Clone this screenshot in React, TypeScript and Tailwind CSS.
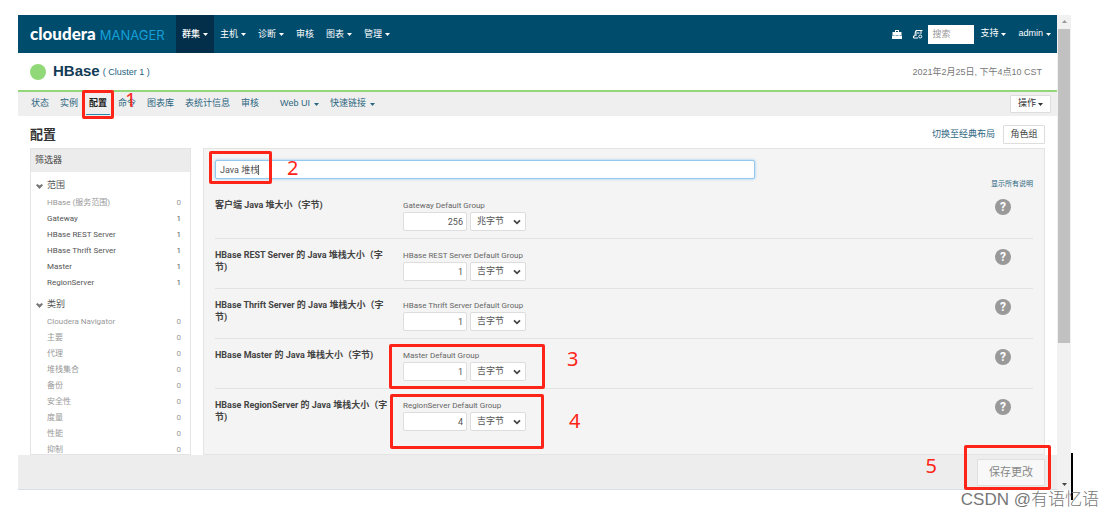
import { useState } from 'react';
import type { ReactNode } from 'react';

const navItems = [
  { label: '群集', menu: true, active: true },
  { label: '主机', menu: true },
  { label: '诊断', menu: true },
  { label: '审核', menu: false },
  { label: '图表', menu: true },
  { label: '管理', menu: true },
];

const tabs = ['状态', '实例', '配置', '命令', '图表库', '表统计信息', '审核'];

const scopes = [
  { label: 'HBase (服务范围)', count: 0 },
  { label: 'Gateway', count: 1 },
  { label: 'HBase REST Server', count: 1 },
  { label: 'HBase Thrift Server', count: 1 },
  { label: 'Master', count: 1 },
  { label: 'RegionServer', count: 1 },
];

const categories = ['Cloudera Navigator', '主要', '代理', '堆栈集合', '备份', '安全性', '度量', '性能', '抑制'].map(
  label => ({ label, count: 0 })
);

const settings = [
  { id: 'gateway', label: '客户端 Java 堆大小（字节)', group: 'Gateway Default Group', value: '256', unit: '兆字节' },
  { id: 'rest', label: 'HBase REST Server 的 Java 堆栈大小（字节)', group: 'HBase REST Server Default Group', value: '1', unit: '吉字节' },
  { id: 'thrift', label: 'HBase Thrift Server 的 Java 堆栈大小（字节)', group: 'HBase Thrift Server Default Group', value: '1', unit: '吉字节' },
  { id: 'master', label: 'HBase Master 的 Java 堆栈大小（字节)', group: 'Master Default Group', value: '1', unit: '吉字节' },
  { id: 'region', label: 'HBase RegionServer 的 Java 堆栈大小（字节)', group: 'RegionServer Default Group', value: '4', unit: '吉字节' },
];

function Caret() {
  return (
    <svg viewBox="0 0 10 6" className="w-[5px] h-[3px] shrink-0" fill="currentColor">
      <path d="M0 0h10L5 6z" />
    </svg>
  );
}

function Chevron({ className }: { className: string }) {
  return (
    <svg viewBox="0 0 12 8" className={className} fill="none" stroke="currentColor" strokeWidth="2.6">
      <path d="M1.5 1.5L6 6l4.5-4.5" />
    </svg>
  );
}

function Mark({ className }: { className: string }) {
  return <span className={'absolute border-[3px] border-[#ff2418] rounded-[2px] pointer-events-none z-10 ' + className} />;
}

function Step({ className, children }: { className: string; children: ReactNode }) {
  return (
    <span className={"absolute font-['Noto_Sans',sans-serif] text-[20px] leading-5 text-[#ff2418] pointer-events-none z-10 " + className}>
      {children}
    </span>
  );
}

function FilterGroup({ title, items }: { title: string; items: { label: string; count: number }[] }) {
  return (
    <section className="pt-[7px]">
      <h3 className="flex items-center gap-1 pl-[5px] h-[14px] text-[9px] text-[#555]">
        <svg viewBox="0 0 14 10" className="w-[7px] h-[5px] text-[#777]" fill="currentColor">
          <path d="M0 2.5L2.5 0 7 3l4.5-3L14 2.5 7 10z" />
        </svg>
        {title}
      </h3>
      <ul className="pt-[2px]">
        {items.map(item => (
          <li key={item.label}>
            <a href="#" className={'flex justify-between pl-4 pr-[9px] h-4 items-center ' + (item.count ? 'text-[#555]' : 'text-[#999]')}>
              <span>{item.label}</span>
              <span>{item.count}</span>
            </a>
          </li>
        ))}
      </ul>
    </section>
  );
}

function SettingRow({ setting }: { setting: (typeof settings)[number] }) {
  return (
    <div className="flex h-[50px] shrink-0 pt-[10px] border-b border-[#e3e3e3] last:border-b-0">
      <label htmlFor={setting.id} className="w-[176px] mr-3 shrink-0 text-[9px] leading-[12px] font-bold text-[#444]">
        {setting.label}
      </label>
      <div className="relative w-[160px] h-[33px]">
        <div className="text-[8px] leading-[13px] text-[#666] whitespace-nowrap">{setting.group}</div>
        <div className="flex gap-[3px]">
          <input id={setting.id} defaultValue={setting.value}
            className="w-16 h-[19px] bg-white border border-[#ddd] rounded-[2px] text-right pr-[3px] text-[9px] text-[#555]" />
          <div className="relative">
            <select aria-label={setting.group + ' 单位'} defaultValue={setting.unit}
              className="appearance-none w-14 h-[19px] bg-white border border-[#ddd] rounded-[2px] pl-[6px] text-[9px] text-[#555]">
              <option>兆字节</option>
              <option>吉字节</option>
            </select>
            <Chevron className="absolute right-[5px] top-[7px] w-2 h-[6px] text-[#444] pointer-events-none" />
          </div>
        </div>
        {setting.id === 'master' && <>
          <Mark className="-left-[14px] -top-[5px] w-[156px] h-[45px]" />
          <Step className="left-[164px] top-0">3</Step>
        </>}
        {setting.id === 'region' && <>
          <Mark className="-left-[13px] -top-[5px] w-[154px] h-[55px]" />
          <Step className="left-[166px] top-3">4</Step>
        </>}
      </div>
      <button aria-label="说明" className="ml-auto mr-[22px] w-4 h-4 rounded-full bg-[#999] text-white text-[12px] leading-4 font-bold">
        ?
      </button>
    </div>
  );
}

export default function App() {
  const [query, setQuery] = useState('Java 堆栈');

  return (
    <div className="relative h-screen overflow-hidden bg-white pt-[15px] pb-7 pl-[18px] pr-[43px] flex font-['Liberation_Sans','Noto_Sans_CJK_SC',sans-serif] text-[9px]">
      <div className="flex-1 min-w-0 flex flex-col">
        <header className="h-[38px] shrink-0 bg-[#004c6d] text-white flex items-center">
          <a href="#" className="flex items-baseline gap-1 pl-3 w-[158px] whitespace-nowrap">
            <span className="font-['Lato',sans-serif] font-black text-[17px]">cloudera</span>
            <span className="font-['Inter',sans-serif] text-[13px] text-[#149fd8]">MANAGER</span>
          </a>
          <nav className="flex h-full">
            {navItems.map(item => (
              <a key={item.label} href="#" className={'flex items-center gap-[3px] px-[6px] pt-px ' + (item.active ? 'bg-[#032f4b] font-medium' : '')}>
                {item.label}
                {item.menu && <Caret />}
              </a>
            ))}
          </nav>
          <div className="ml-auto flex items-center pr-[6px]">
            <svg viewBox="0 0 20 18" className="w-[10px] h-[9px] mr-[11px]" fill="currentColor">
              <path d="M6 4V0h8v4h5v6H1V4zm2 0h4V2H8zM0 11h20v7H0zM5 9h2v3H5zm8 0h2v3h-2z" />
            </svg>
            <svg viewBox="0 0 20 18" className="w-[10px] h-[9px] mr-[5px]" fill="none" stroke="currentColor" strokeWidth="2">
              <path d="M6 12V1h13M16 1v7M6 1C4 5 4 8 4 12H1v4h9M8 6h5" />
              <circle cx="14.5" cy="13" r="3" />
            </svg>
            <input aria-label="搜索" placeholder="搜索" className="w-[46px] h-[19px] bg-white px-1 text-[9px] text-[#444] placeholder:text-[#999]" />
            <a href="#" className="flex items-center gap-[3px] ml-[6px]">支持 <Caret /></a>
            <a href="#" className="flex items-center gap-[3px] ml-3">admin <Caret /></a>
          </div>
        </header>

        <div className="h-[37px] shrink-0 flex items-center px-3">
          <span className="w-4 h-4 rounded-full bg-[#91d878]" />
          <h1 className="ml-[7px] text-[15px] font-bold text-[#123c56]">HBase</h1>
          <a href="#" className="ml-[3px] mt-[2px] text-[#24627f]">( Cluster 1 )</a>
          <span className="ml-auto mr-[3px] pt-[2px] text-[#777]">2021年2月25日, 下午4点10 CST</span>
        </div>

        <div className="h-[26px] shrink-0 flex items-center bg-[#efefef] border-t-2 border-[#93d67c] pl-[13px] pr-[6px] text-[#2c6680]">
          <nav className="flex h-full gap-[11px]">
            {tabs.map((tab, i) => (
              <a key={i} href="#" className={'relative flex items-center ' + (tab === '配置' ? 'text-[#222] font-bold' : '')}>
                {tab}
                {tab === '配置' && <>
                  <span className="absolute -left-[3px] -right-[3px] bottom-px h-px bg-[#2a88ac]" />
                  <Mark className="-left-[7px] -top-[2px] w-8 h-[29px]" />
                </>}
                {tab === '命令' && <Step className="left-[7px] -top-[2px]">1</Step>}
              </a>
            ))}
            <a href="#" className="flex items-center gap-1 ml-[10px]">Web UI <Caret /></a>
            <a href="#" className="flex items-center gap-1">快速链接 <Caret /></a>
          </nav>
          <button className="ml-auto flex items-center justify-center gap-[2px] w-[41px] h-[18px] bg-white border border-[#ddd] rounded-[1px] text-[#333]">
            操作 <Caret />
          </button>
        </div>

        <div className="h-8 shrink-0 flex items-center px-3 pt-[5px]">
          <h2 className="text-[13px] font-bold text-[#333]">配置</h2>
          <a href="#" className="ml-auto mr-2 text-[#2c6680]">切换至经典布局</a>
          <button className="w-[42px] h-[19px] bg-white border border-[#ddd] rounded-[1px] text-[#444]">角色组</button>
        </div>

        <div className="flex-1 min-h-0 overflow-hidden flex gap-3 px-3 font-['Roboto','Noto_Sans_CJK_SC',sans-serif]">
          <aside className="w-[161px] shrink-0 border border-[#e4e4e4] text-[8px]">
            <h3 className="h-[23px] flex items-center bg-[#ececec] pl-1 text-[9px] text-[#444]">筛选器</h3>
            <FilterGroup title="范围" items={scopes} />
            <FilterGroup title="类别" items={categories} />
          </aside>

          <main className="flex-1 min-w-0 flex flex-col border border-[#e4e4e4] bg-[#f4f4f4] px-[11px] pt-[11px]">
            <div className="relative w-[66%] h-[19px] shrink-0">
              <input aria-label="搜索配置" value={query} onChange={e => setQuery(e.target.value)}
                className="w-full h-[19px] block bg-white border border-[#94c8ee] rounded-[2px] shadow-[0_0_3px_#8fc5ee] pl-1 text-[9px] text-[#555] focus:outline-none" />
              <span className="absolute left-[43px] top-[5px] w-px h-[10px] bg-[#666]" />
              <Mark className="-left-[6px] -top-[9px] w-[63px] h-[33px]" />
              <Step className="left-[72px] -top-[2px]">2</Step>
            </div>
            <a href="#" className="self-end h-[10px] text-[7px] leading-[10px] text-[#2c6680]">显示所有说明</a>
            {settings.map(s => <SettingRow key={s.id} setting={s} />)}
          </main>
        </div>

        <footer className="relative h-[35px] shrink-0 flex items-center justify-end bg-[#ededed] border-b border-[#d6e0e4] pr-3">
          <button className="w-[68px] h-[27px] bg-[#f8f8f8] border border-[#e0e0e0] text-[11px] text-[#888]">保存更改</button>
          <Mark className="right-[6px] -top-[10px] w-[87px] h-[45px]" />
          <Step className="right-[120px] top-px">5</Step>
        </footer>
      </div>

      <div className="w-[14px] shrink-0 flex flex-col items-center bg-[#f1f1f1] text-[#999]">
        <span className="h-[14px] flex items-center rotate-180"><Caret /></span>
        <span className="w-3 h-[66%] bg-[#c1c1c1]" />
        <span className="mt-auto h-3 flex items-center text-[#444]"><Caret /></span>
      </div>

      <span className="absolute right-[41px] bottom-[18px] w-[2px] h-[47px] bg-black" />
      <span className="absolute right-[15px] bottom-[6px] text-[17px] leading-6 font-light text-[#777] font-['Liberation_Sans','Noto_Sans_CJK_SC',sans-serif]">CSDN @有语忆语</span>
    </div>
  );
}
